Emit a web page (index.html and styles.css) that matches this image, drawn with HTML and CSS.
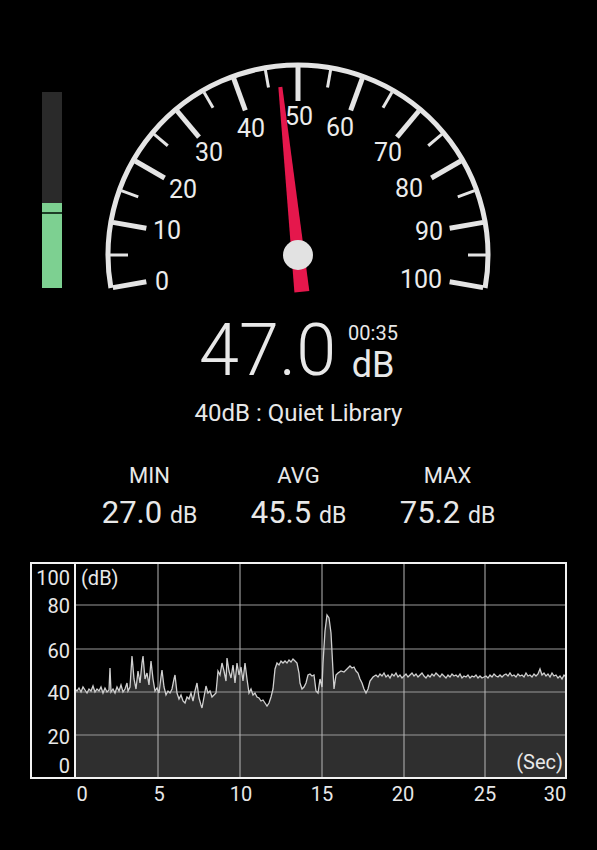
FILE: index.html
```
<!doctype html>
<html>
  <head>
    <title>Sound Meter</title>
    <link rel="stylesheet" href="styles.css">
  </head>
  <body>
    <div class="meter">
      <div class="level">
        <div class="level-fill"></div>
      </div>
      <svg class="gauge" width="400" height="300" viewBox="98 0 400 300">
        <path class="dial" d="M110.9,288 A190,190 0 1 1 485.1,288" />
        <g class="ticks" transform="translate(298 255)">
          <line class="major" x1="-188" y1="0" x2="-154" y2="0" transform="rotate(-10)" />
          <line class="minor" x1="-188" y1="0" x2="-170" y2="0" transform="rotate(0)" />
          <line class="major" x1="-188" y1="0" x2="-154" y2="0" transform="rotate(10)" />
          <line class="minor" x1="-188" y1="0" x2="-170" y2="0" transform="rotate(20)" />
          <line class="major" x1="-188" y1="0" x2="-154" y2="0" transform="rotate(30)" />
          <line class="minor" x1="-188" y1="0" x2="-170" y2="0" transform="rotate(40)" />
          <line class="major" x1="-188" y1="0" x2="-154" y2="0" transform="rotate(50)" />
          <line class="minor" x1="-188" y1="0" x2="-170" y2="0" transform="rotate(60)" />
          <line class="major" x1="-188" y1="0" x2="-154" y2="0" transform="rotate(70)" />
          <line class="minor" x1="-188" y1="0" x2="-170" y2="0" transform="rotate(80)" />
          <line class="major" x1="-188" y1="0" x2="-154" y2="0" transform="rotate(90)" />
          <line class="minor" x1="-188" y1="0" x2="-170" y2="0" transform="rotate(100)" />
          <line class="major" x1="-188" y1="0" x2="-154" y2="0" transform="rotate(110)" />
          <line class="minor" x1="-188" y1="0" x2="-170" y2="0" transform="rotate(120)" />
          <line class="major" x1="-188" y1="0" x2="-154" y2="0" transform="rotate(130)" />
          <line class="minor" x1="-188" y1="0" x2="-170" y2="0" transform="rotate(140)" />
          <line class="major" x1="-188" y1="0" x2="-154" y2="0" transform="rotate(150)" />
          <line class="minor" x1="-188" y1="0" x2="-170" y2="0" transform="rotate(160)" />
          <line class="major" x1="-188" y1="0" x2="-154" y2="0" transform="rotate(170)" />
          <line class="minor" x1="-188" y1="0" x2="-170" y2="0" transform="rotate(180)" />
          <line class="major" x1="-188" y1="0" x2="-154" y2="0" transform="rotate(190)" />
        </g>
        <g class="dial-labels">
          <text x="162" y="290">0</text>
          <text x="167" y="239">10</text>
          <text x="183" y="198">20</text>
          <text x="209" y="161">30</text>
          <text x="251" y="137">40</text>
          <text x="299" y="125">50</text>
          <text x="340" y="136">60</text>
          <text x="388" y="161">70</text>
          <text x="409" y="197">80</text>
          <text x="429" y="240">90</text>
          <text x="421" y="288">100</text>
        </g>
        <g transform="translate(298 255) rotate(-6)">
          <polygon class="needle" points="-2,-169 2,-169 7.5,37 -7.5,37" />
        </g>
        <circle class="pivot" cx="298" cy="255" r="15" />
      </svg>
    </div>

    <div class="reading">
      <div class="big">47.0</div>
      <div class="side">
        <div class="time">00:35</div>
        <div class="unit">dB</div>
      </div>
    </div>
    <div class="desc">40dB : Quiet Library</div>

    <div class="stats">
      <div class="stat">
        <div class="stat-label">MIN</div>
        <div class="stat-value">27.0 <span>dB</span></div>
      </div>
      <div class="stat">
        <div class="stat-label">AVG</div>
        <div class="stat-value">45.5 <span>dB</span></div>
      </div>
      <div class="stat">
        <div class="stat-label">MAX</div>
        <div class="stat-value">75.2 <span>dB</span></div>
      </div>
    </div>

    <svg class="chart" width="597" height="260" viewBox="0 550 597 260">
      <path class="area" d="M75,775 L75,686 77,688 79,685 81,689 83,684 85,687 87,690 89,686 91,688 93,683 95,689 97,686 99,688 101,684 103,690 105,685 107,689 109,687 110,665 111,689 113,686 115,690 117,684 119,688 121,682 123,689 125,686 127,680 128,688 130,684 132,653 134,676 136,686 138,668 140,680 142,660 143,653 145,676 147,670 149,682 151,658 153,676 155,688 157,685 159,690 161,674 162,667 164,684 166,692 168,688 170,690 172,686 174,676 175,672 177,690 179,696 181,692 183,698 185,700 187,694 189,696 191,690 193,698 195,688 197,680 199,695 201,702 202,705 204,694 206,683 208,690 210,688 212,694 214,692 216,690 218,668 220,672 222,660 224,668 226,678 227,655 229,668 231,675 233,662 235,680 237,660 239,672 241,664 243,678 245,660 247,676 249,690 251,686 253,692 255,690 257,694 259,695 261,698 263,697 265,700 267,703 269,700 271,694 273,686 275,666 277,660 279,662 281,658 283,660 285,658 287,660 289,657 291,659 293,656 295,658 297,660 299,670 300,680 302,686 304,684 306,680 308,672 310,671 312,673 314,672 316,688 318,690 320,676 322,684 323,660 325,628 327,612 329,615 331,630 333,668 334,686 336,672 338,670 341,668 344,669 347,666 350,663 352,665 354,664 356,668 358,670 360,676 362,680 364,686 366,690 368,686 370,678 373,674 376,672 378,674 380,671 382,673 384,670 386,674 388,672 390,675 392,671 394,673 396,670 398,674 400,672 402,675 404,673 406,671 408,674 410,672 412,670 414,673 416,671 418,674 420,672 422,670 424,673 426,675 428,672 430,674 432,671 434,673 436,670 438,672 440,674 442,671 444,673 446,675 448,672 450,674 452,671 454,673 456,672 458,674 460,671 462,675 464,673 466,674 468,672 470,675 472,673 474,674 476,672 478,675 480,673 482,675 484,674 486,673 488,675 490,672 492,674 494,671 496,673 498,674 500,672 502,674 504,672 506,671 508,673 510,670 512,673 514,672 516,674 518,671 520,673 522,672 524,674 526,670 528,673 530,672 532,674 534,671 536,673 538,671 540,666 542,672 544,670 546,673 548,671 550,674 552,670 554,673 556,672 558,675 560,673 562,676 564,672 566,674 L566,775 Z" />
      <g class="grid-h">
        <line x1="75" y1="602" x2="566" y2="602" />
        <line x1="75" y1="646" x2="566" y2="646" />
        <line x1="75" y1="689" x2="566" y2="689" />
        <line x1="75" y1="732" x2="566" y2="732" />
      </g>
      <g class="grid-v">
        <line x1="158" y1="560" x2="158" y2="775" />
        <line x1="240" y1="560" x2="240" y2="775" />
        <line x1="322" y1="560" x2="322" y2="775" />
        <line x1="404" y1="560" x2="404" y2="775" />
        <line x1="485" y1="560" x2="485" y2="775" />
      </g>
      <polyline class="curve" points="75,686 77,688 79,685 81,689 83,684 85,687 87,690 89,686 91,688 93,683 95,689 97,686 99,688 101,684 103,690 105,685 107,689 109,687 110,665 111,689 113,686 115,690 117,684 119,688 121,682 123,689 125,686 127,680 128,688 130,684 132,653 134,676 136,686 138,668 140,680 142,660 143,653 145,676 147,670 149,682 151,658 153,676 155,688 157,685 159,690 161,674 162,667 164,684 166,692 168,688 170,690 172,686 174,676 175,672 177,690 179,696 181,692 183,698 185,700 187,694 189,696 191,690 193,698 195,688 197,680 199,695 201,702 202,705 204,694 206,683 208,690 210,688 212,694 214,692 216,690 218,668 220,672 222,660 224,668 226,678 227,655 229,668 231,675 233,662 235,680 237,660 239,672 241,664 243,678 245,660 247,676 249,690 251,686 253,692 255,690 257,694 259,695 261,698 263,697 265,700 267,703 269,700 271,694 273,686 275,666 277,660 279,662 281,658 283,660 285,658 287,660 289,657 291,659 293,656 295,658 297,660 299,670 300,680 302,686 304,684 306,680 308,672 310,671 312,673 314,672 316,688 318,690 320,676 322,684 323,660 325,628 327,612 329,615 331,630 333,668 334,686 336,672 338,670 341,668 344,669 347,666 350,663 352,665 354,664 356,668 358,670 360,676 362,680 364,686 366,690 368,686 370,678 373,674 376,672 378,674 380,671 382,673 384,670 386,674 388,672 390,675 392,671 394,673 396,670 398,674 400,672 402,675 404,673 406,671 408,674 410,672 412,670 414,673 416,671 418,674 420,672 422,670 424,673 426,675 428,672 430,674 432,671 434,673 436,670 438,672 440,674 442,671 444,673 446,675 448,672 450,674 452,671 454,673 456,672 458,674 460,671 462,675 464,673 466,674 468,672 470,675 472,673 474,674 476,672 478,675 480,673 482,675 484,674 486,673 488,675 490,672 492,674 494,671 496,673 498,674 500,672 502,674 504,672 506,671 508,673 510,670 512,673 514,672 516,674 518,671 520,673 522,672 524,674 526,670 528,673 530,672 532,674 534,671 536,673 538,671 540,666 542,672 544,670 546,673 548,671 550,674 552,670 554,673 556,672 558,675 560,673 562,676 564,672 566,674" />
      <rect class="frame" x="31" y="560" width="535" height="215" />
      <line class="frame" x1="75" y1="560" x2="75" y2="775" />
      <g class="axis-y">
        <text x="70" y="582">100</text>
        <text x="70" y="610">80</text>
        <text x="70" y="655">60</text>
        <text x="70" y="697">40</text>
        <text x="70" y="741">20</text>
        <text x="70" y="770">0</text>
      </g>
      <text class="axis-unit" x="81" y="582">(dB)</text>
      <text class="axis-unit end" x="563" y="766">(Sec)</text>
      <g class="axis-x">
        <text x="82" y="798">0</text>
        <text x="159" y="798">5</text>
        <text x="241" y="798">10</text>
        <text x="322" y="798">15</text>
        <text x="403" y="798">20</text>
        <text x="485" y="798">25</text>
        <text x="555" y="798">30</text>
      </g>
    </svg>
  </body>
</html>
```

FILE: styles.css
```
body {
  margin: 0;
  background: #000;
  color: #e8e8e8;
  font-family: Roboto, "Liberation Sans", sans-serif;
}
.meter {
  display: flex;
  height: 300px;
}
.level {
  width: 20px;
  height: 196px;
  margin: 92px 0 0 42px;
  background: #2a2a2a;
  display: flex;
  flex-direction: column;
  justify-content: flex-end;
}
.level-fill {
  height: 85px;
  background: linear-gradient(#7dd091 0, #7dd091 9px, #1d3d26 9px, #1d3d26 11px, #7dd091 11px);
}
.gauge {
  display: block;
  margin-left: 36px;
}
.dial {
  fill: none;
  stroke: #e4e4e4;
  stroke-width: 5;
}
.ticks line {
  stroke: #e4e4e4;
}
.ticks .major {
  stroke-width: 5;
}
.ticks .minor {
  stroke-width: 3;
}
.dial-labels text {
  fill: #ececec;
  font-size: 25px;
  text-anchor: middle;
}
.needle {
  fill: #e5174c;
}
.pivot {
  fill: #e2e2e2;
}
.reading {
  display: flex;
  justify-content: center;
  align-items: flex-end;
  gap: 12px;
  margin-top: 16px;
  height: 70px;
}
.big {
  font-size: 72px;
  font-weight: 300;
  line-height: 70px;
}
.side {
  display: flex;
  flex-direction: column;
  align-items: center;
  margin-bottom: 3px;
}
.time {
  font-size: 20px;
  line-height: 18px;
  margin-bottom: 5px;
}
.unit {
  font-size: 36px;
  line-height: 36px;
}
.desc {
  margin-top: 14px;
  text-align: center;
  font-size: 24px;
  line-height: 26px;
}
.stats {
  display: flex;
  justify-content: center;
  margin-top: 37px;
}
.stat {
  width: 149px;
  text-align: center;
}
.stat-label {
  font-size: 22px;
  line-height: 26px;
}
.stat-value {
  margin-top: 6px;
  font-size: 31px;
  line-height: 36px;
}
.stat-value span {
  font-size: 23px;
}
.chart {
  display: block;
  margin-top: 19px;
}
.area {
  fill: #2f2f2f;
}
.grid-h line {
  stroke: #9a9a9a;
  stroke-width: 1;
}
.grid-v line {
  stroke: #b8b8b8;
  stroke-width: 1;
}
.curve {
  fill: none;
  stroke: #d0d0d0;
  stroke-width: 1.3;
}
.frame {
  fill: none;
  stroke: #f2f2f2;
  stroke-width: 2;
}
.chart text {
  fill: #e8e8e8;
  font-size: 20px;
}
.axis-y text {
  text-anchor: end;
}
.axis-unit.end {
  text-anchor: end;
}
.axis-x text {
  text-anchor: middle;
}
```
